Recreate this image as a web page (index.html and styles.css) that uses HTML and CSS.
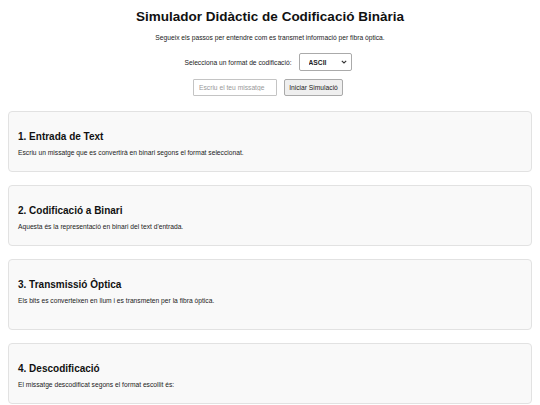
FILE: index.html
```html
<!DOCTYPE html>
<html lang="ca">
<head>
    <meta charset="UTF-8">
    <meta name="viewport" content="width=device-width, initial-scale=1.0">
    <title>Simulador Didàctic de Codificació Binària</title>
    <link rel="stylesheet" href="styles.css">
</head>
<body>
    <header class="intro">
        <h1>Simulador Didàctic de Codificació Binària</h1>
        <p class="subtitle">Segueix els passos per entendre com es transmet informació per fibra òptica.</p>
        <div class="controls">
            <label for="format">Selecciona un format de codificació:</label>
            <span class="select-wrap">
                <select id="format">
                    <option>ASCII</option>
                    <option>UTF-8</option>
                    <option>Unicode</option>
                </select>
                <svg class="chevron" width="6" height="4" viewBox="0 0 6 4"><path d="M0.8 0.8 L3 3 L5.2 0.8" fill="none" stroke="#333" stroke-width="1.1"/></svg>
            </span>
        </div>
        <div class="controls">
            <input type="text" id="message" placeholder="Escriu el teu missatge">
            <button id="startBtn">Iniciar Simulació</button>
        </div>
    </header>

    <section class="step">
        <h2>1. Entrada de Text</h2>
        <p>Escriu un missatge que es convertirà en binari segons el format seleccionat.</p>
    </section>
    <section class="step">
        <h2>2. Codificació a Binari</h2>
        <p>Aquesta és la representació en binari del text d'entrada.</p>
    </section>
    <section class="step">
        <h2>3. Transmissió Òptica</h2>
        <p>Els bits es converteixen en llum i es transmeten per la fibra òptica.</p>
        <div class="fiber"></div>
    </section>
    <section class="step">
        <h2>4. Descodificació</h2>
        <p>El missatge descodificat segons el format escollit és:</p>
    </section>
</body>
</html>
```

FILE: styles.css
```css
body {
    margin: 0;
    padding: 0 8px;
    font-family: 'Liberation Sans', Arial, sans-serif;
    font-size: 6.7px;
    color: #222;
    background: #ffffff;
}
.intro {
    text-align: center;
    padding-top: 9px;
    margin-bottom: 15px;
}
h1 {
    margin: 0;
    font-size: 13.5px;
    line-height: 16px;
    color: #111;
}
.subtitle {
    margin: 8px 0 11px;
    line-height: 9px;
}
.controls {
    display: flex;
    justify-content: center;
    align-items: center;
    gap: 7px;
    margin-bottom: 8px;
    padding-right: 4px;
}
.controls:last-child {
    margin-bottom: 0;
}
.select-wrap {
    position: relative;
    display: inline-block;
}
select {
    appearance: none;
    -webkit-appearance: none;
    box-sizing: border-box;
    width: 53px;
    height: 18px;
    padding: 0 9px;
    font-family: inherit;
    font-size: 6.7px;
    font-weight: bold;
    color: #222;
    background: #fff;
    border: 1px solid #aaa;
    border-radius: 2px;
    display: block;
}
.chevron {
    position: absolute;
    right: 5px;
    top: 7px;
    pointer-events: none;
}
input {
    box-sizing: border-box;
    width: 84px;
    height: 17px;
    padding: 0 5px;
    font-family: inherit;
    font-size: 6.7px;
    border: 1px solid #c4c4c4;
    border-radius: 1px;
}
input::placeholder {
    color: #999;
}
button {
    box-sizing: border-box;
    width: 59px;
    height: 17px;
    padding: 0;
    font-family: inherit;
    font-size: 6.7px;
    color: #222;
    background: #efefef;
    border: 1px solid #aaa;
    border-radius: 2px;
}
.step {
    background: #f9f9f9;
    border: 1px solid #e2e2e2;
    border-radius: 4px;
    padding: 9px;
    margin-bottom: 13px;
}
.step h2 {
    margin: 10px 0 5px;
    font-size: 10px;
    line-height: 12px;
    color: #111;
}
.step p {
    margin: 0 0 5px;
    line-height: 9px;
}
.fiber {
    height: 10px;
}
```
